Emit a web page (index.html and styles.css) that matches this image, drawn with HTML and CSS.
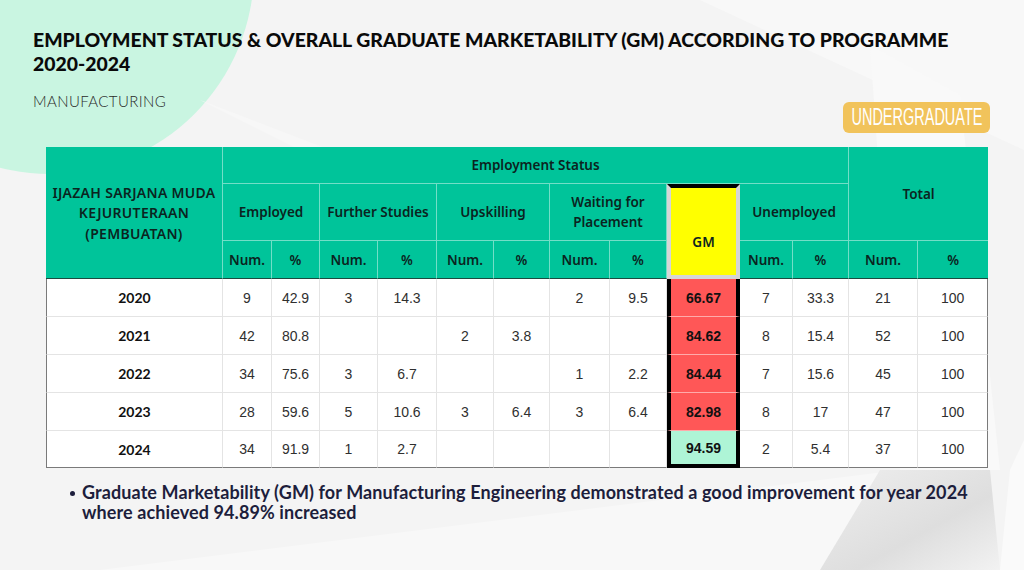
FILE: index.html
```html
<!DOCTYPE html>
<html lang="en">
<head>
<meta charset="utf-8">
<title>Employment Status &amp; Overall Graduate Marketability</title>
<link rel="stylesheet" href="styles.css">
</head>
<body>
<div class="slide">
  <div class="decor" aria-hidden="true">
    <div class="mint-circle"></div>
    <svg class="shapes" width="1024" height="570" viewBox="0 0 1024 570">
      <defs>
        <linearGradient id="shade" x1="0" y1="0" x2="1" y2="1">
          <stop offset="0" stop-color="#efefef"/>
          <stop offset="0.6" stop-color="#dedede"/>
          <stop offset="1" stop-color="#f2f2f2"/>
        </linearGradient>
      </defs>
      <polygon points="700,0 1024,0 1024,150" fill="#f8f8f8"/>
      <polygon points="870,45 960,95 1000,470 900,470" fill="#f9f9f9"/>
      <polygon points="200,100 300,150 330,150" fill="#f7f7f7"/>
      <polygon points="100,570 900,470 960,470 990,570" fill="#f8f8f8"/>
      <polygon points="880,470 990,470 1000,570 820,570" fill="url(#shade)"/>
      <polygon points="1010,470 1024,440 1024,570 1000,570" fill="#fafafa"/>
    </svg>
  </div>

  <div class="content">
    <h1 class="title">EMPLOYMENT STATUS &amp; OVERALL GRADUATE MARKETABILITY (GM) ACCORDING TO PROGRAMME 2020-2024</h1>
    <div class="subrow">
      <p class="subtitle">MANUFACTURING</p>
      <span class="badge"><span class="badge-text">UNDERGRADUATE</span></span>
    </div>

    <table class="grid">
      <colgroup>
        <col style="width:177px"><col style="width:49px"><col style="width:48px"><col style="width:58px"><col style="width:59px"><col style="width:57px"><col style="width:56px"><col style="width:60px"><col style="width:57px"><col style="width:73px"><col style="width:53px"><col style="width:56px"><col style="width:69px"><col style="width:70px">
      </colgroup>
      <thead>
        <tr class="h1row">
          <th rowspan="3" class="prog">IJAZAH SARJANA MUDA<br>KEJURUTERAAN<br>(PEMBUATAN)</th>
          <th colspan="11">Employment Status</th>
          <th colspan="2" rowspan="2" class="endcol">Total</th>
        </tr>
        <tr class="h2row">
          <th colspan="2">Employed</th>
          <th colspan="2">Further Studies</th>
          <th colspan="2">Upskilling</th>
          <th colspan="2">Waiting for<br>Placement</th>
          <th rowspan="2" class="gm-head">GM</th>
          <th colspan="2">Unemployed</th>
        </tr>
        <tr class="h3row">
          <th>Num.</th><th>%</th>
          <th>Num.</th><th>%</th>
          <th>Num.</th><th>%</th>
          <th>Num.</th><th>%</th>
          <th>Num.</th><th>%</th>
          <th>Num.</th><th class="endcol">%</th>
        </tr>
      </thead>
      <tbody>
        <tr>
          <td class="year">2020</td>
          <td>9</td><td>42.9</td><td>3</td><td>14.3</td><td></td><td></td><td>2</td><td>9.5</td>
          <td class="gm low">66.67</td>
          <td>7</td><td>33.3</td><td>21</td><td class="endcol">100</td>
        </tr>
        <tr>
          <td class="year">2021</td>
          <td>42</td><td>80.8</td><td></td><td></td><td>2</td><td>3.8</td><td></td><td></td>
          <td class="gm low">84.62</td>
          <td>8</td><td>15.4</td><td>52</td><td class="endcol">100</td>
        </tr>
        <tr>
          <td class="year">2022</td>
          <td>34</td><td>75.6</td><td>3</td><td>6.7</td><td></td><td></td><td>1</td><td>2.2</td>
          <td class="gm low">84.44</td>
          <td>7</td><td>15.6</td><td>45</td><td class="endcol">100</td>
        </tr>
        <tr>
          <td class="year">2023</td>
          <td>28</td><td>59.6</td><td>5</td><td>10.6</td><td>3</td><td>6.4</td><td>3</td><td>6.4</td>
          <td class="gm low">82.98</td>
          <td>8</td><td>17</td><td>47</td><td class="endcol">100</td>
        </tr>
        <tr class="last">
          <td class="year">2024</td>
          <td>34</td><td>91.9</td><td>1</td><td>2.7</td><td></td><td></td><td></td><td></td>
          <td class="gm high">94.59</td>
          <td>2</td><td>5.4</td><td>37</td><td class="endcol">100</td>
        </tr>
      </tbody>
    </table>

    <ul class="notes">
      <li>Graduate Marketability (GM) for Manufacturing Engineering demonstrated a good improvement for year 2024 where achieved 94.89% increased</li>
    </ul>
  </div>
</div>
</body>
</html>
```

FILE: styles.css
```css
* { box-sizing: border-box; }

html, body {
  margin: 0;
  padding: 0;
}

body {
  background: #f4f4f4;
  font-family: "Lato", "Liberation Sans", sans-serif;
}

.slide {
  position: relative;
  width: 1024px;
  height: 570px;
  overflow: hidden;
  background: #f4f4f4;
}

.decor {
  position: absolute;
  inset: 0;
  z-index: 0;
}

.mint-circle {
  position: absolute;
  left: -154px;
  top: -234px;
  width: 408px;
  height: 408px;
  border-radius: 50%;
  background: #c9f5e1;
}

.shapes {
  position: absolute;
  left: 0;
  top: 0;
}

.content {
  position: relative;
  z-index: 1;
  padding: 28px 34px 0 33px;
}

.title {
  margin: 0;
  font-family: "Lato", sans-serif;
  font-weight: 900;
  font-size: 19.4px;
  line-height: 24px;
  color: #0a0a0a;
  letter-spacing: 0;
  max-width: 940px;
}

.subrow {
  display: flex;
  justify-content: space-between;
  align-items: flex-start;
  margin-top: 16px;
}

.subtitle {
  margin: 0;
  font-family: "Lato", sans-serif;
  font-weight: 300;
  font-size: 15px;
  line-height: 18px;
  letter-spacing: 0.4px;
  color: #2a2a2a;
}

.badge {
  margin-top: 10px;
  display: flex;
  align-items: center;
  justify-content: center;
  width: 147px;
  height: 31px;
  background: #f1c35b;
  border-radius: 6px;
  overflow: hidden;
}

.badge-text {
  display: inline-block;
  color: #ffffff;
  font-family: "Liberation Sans", sans-serif;
  font-weight: 400;
  font-size: 23px;
  line-height: 31px;
  white-space: nowrap;
  transform: scaleX(0.63);
  transform-origin: center;
}

.grid {
  margin: 14px 0 0 13px;
  width: 942px;
  table-layout: fixed;
  border-collapse: separate;
  border-spacing: 0;
  font-family: "Liberation Sans", Arial, sans-serif;
}

.grid th {
  background: #00c49a;
  color: #0b241f;
  font-family: "Noto Sans", sans-serif;
  font-weight: 600;
  font-size: 13.5px;
  line-height: 20px;
  text-align: center;
  vertical-align: middle;
  padding: 0 2px;
  border-right: 1px solid rgba(255, 255, 255, 0.45);
  border-bottom: 1px solid rgba(255, 255, 255, 0.45);
}

.grid th.endcol { border-right: none; }

.grid .prog {
  font-size: 14px;
  line-height: 20.5px;
  letter-spacing: 0.3px;
  padding-top: 2px;
}

.h1row { height: 37px; }
.h2row { height: 57px; }
.h3row { height: 38px; }

.grid .h3row th {
  border-bottom: 1px solid #1c4a40;
}

.grid .prog {
  border-bottom: 1px solid #1c4a40;
}

.grid th.gm-head {
  background: #ffff00;
  border-left: 4px solid #d6d6d6;
  border-right: 4px solid #d6d6d6;
  border-bottom: 4px solid #d6d6d6;
  border-top: 4px solid #000000;
  padding-top: 20px;
}

.grid td {
  background: #ffffff;
  height: 38px;
  text-align: center;
  vertical-align: middle;
  font-size: 14px;
  color: #2f2f2f;
  padding: 0;
  border-right: 1px solid #e4e4e4;
  border-bottom: 1px solid #e4e4e4;
}

.grid td.year {
  font-family: "Lato", sans-serif;
  font-weight: 700;
  font-size: 14px;
  color: #111;
  border-left: 1px solid #7a7a7a;
}

.grid td.endcol {
  border-right: 1px solid #7a7a7a;
}

.grid tr.last td {
  height: 37px;
  border-bottom: 1px solid #7a7a7a;
}

.grid td.gm {
  font-weight: 700;
  color: #111;
  border-left: 4px solid #000000;
  border-right: 4px solid #000000;
  border-bottom: 1px solid rgba(255, 255, 255, 0.5);
}

.grid td.low { background: #ff5757; }
.grid td.high { background: #aef5d6; }

.grid tr.last td.gm {
  border-bottom: 4px solid #000000;
}

.notes {
  margin: 14px 0 0 0;
  padding: 0 0 0 49px;
  list-style: none;
}

.notes li {
  position: relative;
  font-family: "Lato", sans-serif;
  font-weight: 700;
  font-size: 18px;
  line-height: 20px;
  letter-spacing: 0.1px;
  color: #1d1e3c;
  max-width: 900px;
}

.notes li::before {
  content: "";
  position: absolute;
  left: -12px;
  top: 9px;
  width: 5px;
  height: 5px;
  border-radius: 50%;
  background: #1d1e3c;
}
```
